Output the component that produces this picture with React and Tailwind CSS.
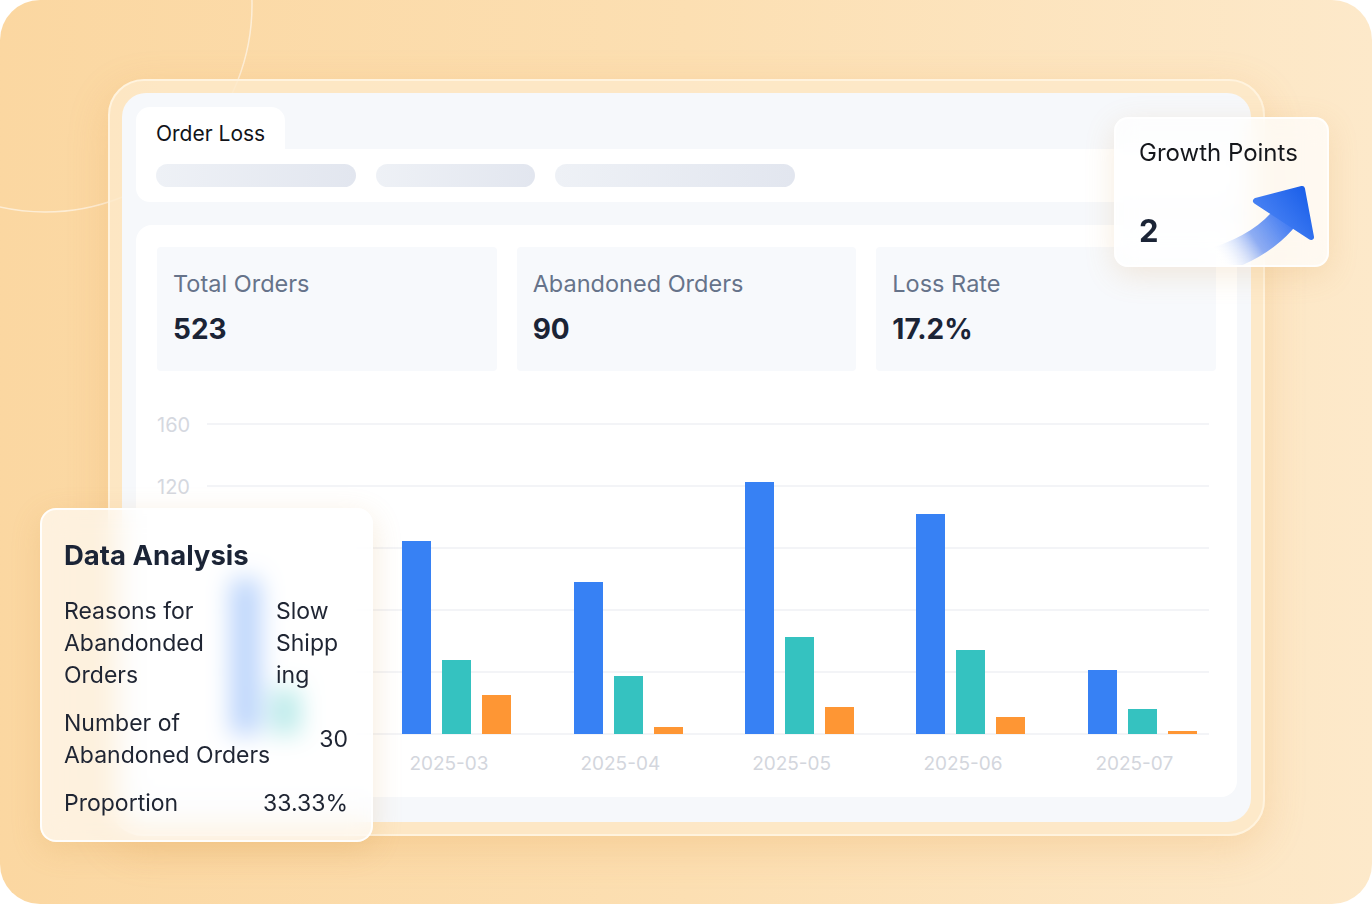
import React from 'react';

const groups = [
  { label: '', bars: [155, 45, 0] },
  { label: '2025-03', bars: [193, 74, 39] },
  { label: '2025-04', bars: [152, 58, 7] },
  { label: '2025-05', bars: [252, 97, 27] },
  { label: '2025-06', bars: [220, 84, 17] },
  { label: '2025-07', bars: [64, 25, 3] },
];

const barColors = ['bg-[#3781f4]', 'bg-[#35c2c0]', 'bg-[#fe9634]'];

// y offsets of the grid lines inside the chart box
const gridLines = [11, 73, 135, 197, 259, 321];
// the lower ticks sit under the Data Analysis card and are not visible
const yLabels = ['160', '120'];

const GrowthArrow = () => (
  <svg width="104" height="84" viewBox="0 0 104 84" fill="none">
    <defs>
      <linearGradient id="shaft" x1="76" y1="32" x2="8" y2="78" gradientUnits="userSpaceOnUse">
        <stop offset="0" stopColor="#3a76f2" />
        <stop offset="0.5" stopColor="#7299f2" stopOpacity="0.8" />
        <stop offset="1" stopColor="#ffffff" stopOpacity="0" />
      </linearGradient>
      <linearGradient id="head" x1="95" y1="6" x2="52" y2="40" gradientUnits="userSpaceOnUse">
        <stop offset="0" stopColor="#1a5fe9" />
        <stop offset="1" stopColor="#4a83f4" />
      </linearGradient>
    </defs>
    <path d="M75 32 Q52 62 6 77" stroke="url(#shaft)" strokeWidth="27" />
    <polygon
      points="44,18 90,6 99,54"
      fill="url(#head)"
      stroke="url(#head)"
      strokeWidth="6"
      strokeLinejoin="round"
    />
  </svg>
);

const StatCard = ({ label, value }) => (
  <div className="h-[124px] rounded-[4px] bg-[#f7f9fc] px-4 pt-[22px]">
    <div className="text-[23.5px] leading-[30px] text-[#66738a]">{label}</div>
    <div className="mt-[14px] text-[28px] leading-[32px] font-bold text-[#1b2436]">{value}</div>
  </div>
);

const App = () => {
  return (
    <div className="min-h-screen bg-white" style={{ fontFamily: 'Inter, "Noto Sans", sans-serif' }}>
      <div className="relative w-[1372px] h-[904px] overflow-hidden rounded-[40px] bg-gradient-to-r from-[#fbd7a1] via-[#fcdfb2] to-[#fde9ca] pl-[108px] pt-[79px]">
        {/* decorative ring */}
        <svg className="absolute left-0 top-0" width="300" height="260">
          <circle cx="45" cy="5" r="207" fill="none" stroke="#ffffff" strokeOpacity="0.55" strokeWidth="1.5" />
        </svg>

        {/* frame */}
        <div className="relative w-[1157px] h-[757px] rounded-[36px] border-2 border-[#fff3de] bg-[#fde9c9]/85 p-3 shadow-[0_12px_40px_rgba(226,150,60,0.22)]">
          <div className="flex h-full flex-col rounded-[24px] bg-[#f6f8fb] px-[14px] pt-[14px] pb-[25px]">
            {/* tab */}
            <div className="flex h-[42px] items-center self-start rounded-t-[14px] bg-white px-[20px] pt-[11px] text-[21px] text-[#111318]">
              Order Loss
            </div>
            {/* filter bar */}
            <div className="flex h-[53px] items-center gap-5 rounded-b-[14px] rounded-tr-[14px] bg-white px-5">
              <div className="h-[23px] w-[200px] rounded-full bg-gradient-to-r from-[#eef1f6] to-[#e2e6ef] blur-[0.5px]" />
              <div className="h-[23px] w-[159px] rounded-full bg-gradient-to-r from-[#eef1f6] to-[#e2e6ef] blur-[0.5px]" />
              <div className="h-[23px] w-[240px] rounded-full bg-gradient-to-r from-[#eef1f6] to-[#e2e6ef] blur-[0.5px]" />
            </div>

            {/* main panel */}
            <div className="mt-[23px] flex-1 rounded-[16px] bg-white px-[21px] pt-[22px]">
              <div className="grid grid-cols-3 gap-5">
                <StatCard label="Total Orders" value="523" />
                <StatCard label="Abandoned Orders" value="90" />
                <StatCard label="Loss Rate" value="17.2%" />
              </div>

              {/* chart */}
              <div className="relative mt-[42px] h-[370px]">
                {gridLines.map((top) => (
                  <div
                    key={top}
                    className="absolute left-[50px] right-[7px] h-[2px] bg-[#f3f4f7]"
                    style={{ top: top - 1 }}
                  />
                ))}
                {yLabels.map((label, i) => (
                  <div
                    key={label}
                    className="absolute left-0 text-[20px] leading-[24px] text-[#d5d8df]"
                    style={{ top: gridLines[i] - 11 }}
                  >
                    {label}
                  </div>
                ))}

                <div className="absolute left-[43px] top-0 grid h-[321px] w-[1028px] grid-cols-6">
                  {groups.map((g, gi) => (
                    <div key={gi} className="flex items-end justify-center gap-[11px]">
                      {g.bars.map((h, i) => (
                        <div key={i} className={`w-[29px] ${barColors[i]}`} style={{ height: h }} />
                      ))}
                    </div>
                  ))}
                </div>

                <div className="absolute left-[35px] top-[338px] grid w-[1028px] grid-cols-6">
                  {groups.map((g, gi) => (
                    <div key={gi} className="text-center text-[19px] leading-[26px] text-[#d3d6dd]">
                      {g.label}
                    </div>
                  ))}
                </div>
              </div>
            </div>
          </div>
        </div>

        {/* Growth Points card */}
        <div className="absolute left-[1114px] top-[117px] h-[150px] w-[215px] overflow-hidden rounded-[14px] border-2 border-white/80 bg-white/75 pl-[23px] pt-[19px] shadow-[0_8px_30px_rgba(210,150,70,0.18)] backdrop-blur-md">
          <div className="text-[24px] leading-[30px] text-[#15171c]">Growth Points</div>
          <div className="mt-[45px] text-[31px] leading-[36px] font-bold text-[#1b2436]">2</div>
          <div className="absolute left-[96px] top-[64px]">
            <GrowthArrow />
          </div>
        </div>

        {/* Data Analysis card */}
        <div className="absolute left-[40px] top-[508px] h-[334px] w-[333px] rounded-[16px] border-2 border-white/90 bg-white/65 pl-[22px] pr-[23px] pt-[29px] text-[#1f2533] shadow-[0_8px_30px_rgba(210,150,70,0.2)] backdrop-blur-[12px]">
          <div className="text-[27.5px] leading-[32px] font-bold text-[#1b2436]">Data Analysis</div>
          <div className="mt-6 space-y-4 text-[23px] leading-[32px]">
            <div className="flex">
              <div className="w-[212px]">
                Reasons for
                <br />
                Abandonded
                <br />
                Orders
              </div>
              <div className="w-[72px]">
                Slow
                <br />
                Shipp
                <br />
                ing
              </div>
            </div>
            <div className="flex items-center justify-between">
              <div>
                Number of
                <br />
                Abandoned Orders
              </div>
              <div>30</div>
            </div>
            <div className="flex items-center justify-between">
              <div>Proportion</div>
              <div>33.33%</div>
            </div>
          </div>
        </div>
      </div>
    </div>
  );
};

export default App;
